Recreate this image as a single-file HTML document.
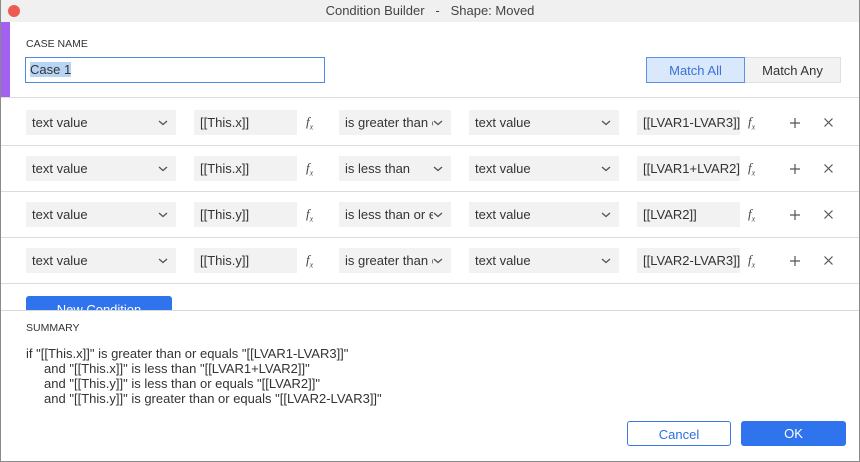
<!DOCTYPE html>
<html><head><style>
*{box-sizing:border-box;margin:0;padding:0}
body{width:860px;height:462px;overflow:hidden;background:#fff;font-family:"Liberation Sans",sans-serif;color:#333;position:relative}
.a{position:absolute}
.win{position:absolute;left:0;top:0;width:860px;height:462px;border:1px solid #8a8a8a;border-top:none}
.title{left:0;top:0;width:860px;height:22px;background:#f0f0f0;text-align:center;font-size:13px;line-height:22px;color:#444}
.sel{background:#f2f2f2;height:25px;font-size:13px;line-height:25px;padding-left:6px;color:#333;white-space:nowrap;overflow:hidden}
.sel svg{position:absolute;right:0;top:0;background:#f2f2f2;padding:0 8px 0 2px;width:20px;height:25px}
.fx{font-family:"Liberation Serif",serif;font-style:italic;font-size:13px;color:#444}
.line{height:1px;background:#dcdcdc;left:1px;width:858px}
.btn{height:25px;border-radius:3px;font-size:13px;text-align:center;line-height:25px}
.pl,.x{position:absolute;width:10px;height:10px}
</style></head><body>
<div class="a title">Condition Builder &nbsp; - &nbsp; Shape: Moved</div>
<div class="a" style="left:8px;top:5px;width:12px;height:12px;border-radius:50%;background:#ee5a52"></div>
<div class="a" style="left:1px;top:22px;width:9px;height:75px;background:#a461f0"></div>
<div class="a" style="left:26px;top:38px;font-size:10.5px;color:#333">CASE NAME</div>
<div class="a" style="left:25px;top:57px;width:300px;height:26px;border:1px solid #4f89e0;font-size:13px;line-height:24px;padding-left:4px"><span style="background:#b7d4f5">Case 1</span></div>
<div class="a btn" style="left:646px;top:57px;width:99px;height:26px;background:#d9e8fb;border:1px solid #5a92e0;color:#3a72d8;border-radius:0">Match All</div>
<div class="a btn" style="left:745px;top:57px;width:96px;height:26px;background:#f2f2f2;border:1px solid #e0e0e0;border-left:none;color:#333;border-radius:0">Match Any</div>
<div class="a line" style="top:97px"></div>
<div class="a line" style="top:145px"></div>
<div class="a line" style="top:191px"></div>
<div class="a line" style="top:237px"></div>
<div class="a line" style="top:283px"></div>

<svg width="0" height="0" style="position:absolute"><defs><symbol id="ch" viewBox="0 0 10 25"><path d="M1 11l4 3.5 4-3.5" fill="none" stroke="#555" stroke-width="1.3"/></symbol></defs></svg>

<div class="a sel" style="left:26px;top:110px;width:150px">text value<svg><use href="#ch"/></svg></div>
<div class="a sel" style="left:194px;top:110px;width:103px">[[This.x]]</div>
<div class="a fx" style="left:306px;top:114px">f<sub style="font-size:8px">x</sub></div>
<div class="a sel" style="left:339px;top:110px;width:112px">is greater than or equals<svg style="padding-left:0;width:18px"><use href="#ch"/></svg></div>
<div class="a sel" style="left:469px;top:110px;width:150px">text value<svg><use href="#ch"/></svg></div>
<div class="a sel" style="left:637px;top:110px;width:103px">[[LVAR1-LVAR3]]</div>
<div class="a fx" style="left:748px;top:114px">f<sub style="font-size:8px">x</sub></div>
<svg class="pl" style="left:790px;top:118px"><path d="M5 0v10M0 5h10" stroke="#555" stroke-width="1.2"/></svg>
<svg class="x" style="left:824px;top:118px;width:9px;height:9px"><path d="M0.5 0.5l8 8M8.5 0.5l-8 8" stroke="#555" stroke-width="1.2"/></svg>

<div class="a sel" style="left:26px;top:156px;width:150px">text value<svg><use href="#ch"/></svg></div>
<div class="a sel" style="left:194px;top:156px;width:103px">[[This.x]]</div>
<div class="a fx" style="left:306px;top:160px">f<sub style="font-size:8px">x</sub></div>
<div class="a sel" style="left:339px;top:156px;width:112px">is less than<svg><use href="#ch"/></svg></div>
<div class="a sel" style="left:469px;top:156px;width:150px">text value<svg><use href="#ch"/></svg></div>
<div class="a sel" style="left:637px;top:156px;width:103px">[[LVAR1+LVAR2]]</div>
<div class="a fx" style="left:748px;top:160px">f<sub style="font-size:8px">x</sub></div>
<svg class="pl" style="left:790px;top:164px"><path d="M5 0v10M0 5h10" stroke="#555" stroke-width="1.2"/></svg>
<svg class="x" style="left:824px;top:164px;width:9px;height:9px"><path d="M0.5 0.5l8 8M8.5 0.5l-8 8" stroke="#555" stroke-width="1.2"/></svg>

<div class="a sel" style="left:26px;top:202px;width:150px">text value<svg><use href="#ch"/></svg></div>
<div class="a sel" style="left:194px;top:202px;width:103px">[[This.y]]</div>
<div class="a fx" style="left:306px;top:206px">f<sub style="font-size:8px">x</sub></div>
<div class="a sel" style="left:339px;top:202px;width:112px">is less than or equals<svg style="padding-left:0;width:18px"><use href="#ch"/></svg></div>
<div class="a sel" style="left:469px;top:202px;width:150px">text value<svg><use href="#ch"/></svg></div>
<div class="a sel" style="left:637px;top:202px;width:103px">[[LVAR2]]</div>
<div class="a fx" style="left:748px;top:206px">f<sub style="font-size:8px">x</sub></div>
<svg class="pl" style="left:790px;top:210px"><path d="M5 0v10M0 5h10" stroke="#555" stroke-width="1.2"/></svg>
<svg class="x" style="left:824px;top:210px;width:9px;height:9px"><path d="M0.5 0.5l8 8M8.5 0.5l-8 8" stroke="#555" stroke-width="1.2"/></svg>

<div class="a sel" style="left:26px;top:248px;width:150px">text value<svg><use href="#ch"/></svg></div>
<div class="a sel" style="left:194px;top:248px;width:103px">[[This.y]]</div>
<div class="a fx" style="left:306px;top:252px">f<sub style="font-size:8px">x</sub></div>
<div class="a sel" style="left:339px;top:248px;width:112px">is greater than or equals<svg style="padding-left:0;width:18px"><use href="#ch"/></svg></div>
<div class="a sel" style="left:469px;top:248px;width:150px">text value<svg><use href="#ch"/></svg></div>
<div class="a sel" style="left:637px;top:248px;width:103px">[[LVAR2-LVAR3]]</div>
<div class="a fx" style="left:748px;top:252px">f<sub style="font-size:8px">x</sub></div>
<svg class="pl" style="left:790px;top:256px"><path d="M5 0v10M0 5h10" stroke="#555" stroke-width="1.2"/></svg>
<svg class="x" style="left:824px;top:256px;width:9px;height:9px"><path d="M0.5 0.5l8 8M8.5 0.5l-8 8" stroke="#555" stroke-width="1.2"/></svg>

<div class="a" style="left:26px;top:296px;width:146px;height:14px;overflow:hidden;background:#2f74ec;border-radius:3px 3px 0 0"><div style="color:#fff;font-size:13px;text-align:center;line-height:25px;margin-top:1px">New Condition</div></div>
<div class="a" style="left:1px;top:310px;width:858px;height:1px;background:#d8d8d8"></div>
<div class="a" style="left:26px;top:322px;font-size:10.5px;color:#333">SUMMARY</div>
<div class="a" style="left:26px;top:346px;font-size:13px;line-height:15px;color:#333;white-space:pre">if "[[This.x]]" is greater than or equals "[[LVAR1-LVAR3]]"
     and "[[This.x]]" is less than "[[LVAR1+LVAR2]]"
     and "[[This.y]]" is less than or equals "[[LVAR2]]"
     and "[[This.y]]" is greater than or equals "[[LVAR2-LVAR3]]"</div>
<div class="a btn" style="left:627px;top:421px;width:104px;border:1px solid #3a7ae8;color:#2f6fe0;background:#fff">Cancel</div>
<div class="a btn" style="left:741px;top:421px;width:105px;background:#2f74ec;color:#fff">OK</div>
<div class="win"></div>
</body></html>
